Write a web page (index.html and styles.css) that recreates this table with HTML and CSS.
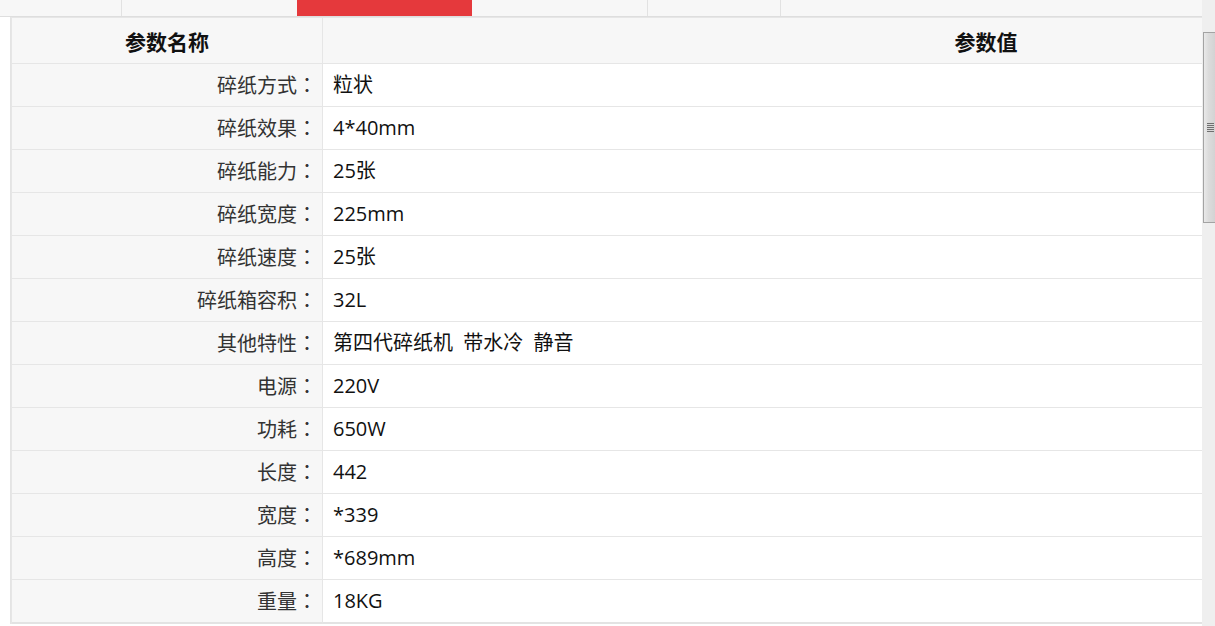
FILE: index.html
```html
<!DOCTYPE html>
<html lang="zh-CN">
<head>
<meta charset="utf-8">
<title>参数</title>
<link rel="stylesheet" href="styles.css">
</head>
<body>
<div class="page">
  <div class="main">
    <div class="tabs">
      <div class="tab tab-a"></div>
      <div class="tab tab-b"></div>
      <div class="tab tab-active"></div>
      <div class="tab tab-b"></div>
      <div class="tab tab-c"></div>
      <div class="tab tab-rest"></div>
    </div>
    <div class="spec">
      <table class="spec-table">
        <colgroup><col class="col-name"><col class="col-value"></colgroup>
        <thead>
          <tr><th>参数名称</th><th>参数值</th></tr>
        </thead>
        <tbody>
          <tr><td class="k">碎纸方式<span class="colon" lang="ja">：</span></td><td class="v">粒状</td></tr>
          <tr><td class="k">碎纸效果<span class="colon" lang="ja">：</span></td><td class="v">4*40mm</td></tr>
          <tr><td class="k">碎纸能力<span class="colon" lang="ja">：</span></td><td class="v">25张</td></tr>
          <tr><td class="k">碎纸宽度<span class="colon" lang="ja">：</span></td><td class="v">225mm</td></tr>
          <tr><td class="k">碎纸速度<span class="colon" lang="ja">：</span></td><td class="v">25张</td></tr>
          <tr><td class="k">碎纸箱容积<span class="colon" lang="ja">：</span></td><td class="v">32L</td></tr>
          <tr><td class="k">其他特性<span class="colon" lang="ja">：</span></td><td class="v">第四代碎纸机 带水冷 静音</td></tr>
          <tr><td class="k">电源<span class="colon" lang="ja">：</span></td><td class="v">220V</td></tr>
          <tr><td class="k">功耗<span class="colon" lang="ja">：</span></td><td class="v">650W</td></tr>
          <tr><td class="k">长度<span class="colon" lang="ja">：</span></td><td class="v">442</td></tr>
          <tr><td class="k">宽度<span class="colon" lang="ja">：</span></td><td class="v">*339</td></tr>
          <tr><td class="k">高度<span class="colon" lang="ja">：</span></td><td class="v">*689mm</td></tr>
          <tr><td class="k">重量<span class="colon" lang="ja">：</span></td><td class="v">18KG</td></tr>
        </tbody>
      </table>
    </div>
  </div>
  <div class="scrollbar">
    <div class="thumb"><div class="grip"></div></div>
  </div>
</div>
</body>
</html>
```
FILE: styles.css
```css
* { box-sizing: border-box; }
html, body { margin: 0; padding: 0; background: #fff; }
body {
  font-family: "Microsoft YaHei", "Noto Sans CJK SC", sans-serif;
  color: #333;
}
.page {
  display: flex;
  height: 626px;
  overflow: hidden;
}
.main {
  flex: 1;
  min-width: 0;
  overflow: hidden;
}
.tabs {
  display: flex;
  height: 17px;
  background: #f7f7f7;
  border-bottom: 1px solid #dedede;
}
.tab { height: 16px; flex: none; }
.tab-a { width: 122px; border-right: 1px solid #e2e2e2; }
.tab-b { width: 175px; }
.tab-active { width: 175px; background: #e5393c; }
.tab-c { width: 134px; border-left: 1px solid #e2e2e2; border-right: 1px solid #e2e2e2; }
.tab-rest { flex: 1; }
.spec {
  margin-left: 10px;
  border-left: 1px solid #e4e4e4;
  width: 1640px;
}
.spec-table {
  table-layout: fixed;
  width: 1639px;
  border-collapse: separate;
  border-spacing: 0;
  border-top: 1px solid #e6e6e6;
  border-left: 1px solid #e6e6e6;
}
.col-name { width: 311px; }
.col-value { width: 1327px; }
.spec-table th,
.spec-table td {
  padding: 0;
  border-right: 1px solid #e6e6e6;
  border-bottom: 1px solid #e6e6e6;
  white-space: nowrap;
}
.spec-table th {
  height: 46px;
  line-height: 43px;
  padding-top: 2px;
  background: #f7f7f7;
  font-size: 21px;
  font-weight: bold;
  color: #111;
  text-align: center;
}
.spec-table td {
  height: 43px;
  line-height: 42px;
  font-size: 20px;
}
.spec-table tbody tr:last-child td { border-bottom: 2px solid #e3e3e3; }
.k {
  background: #f7f7f7;
  text-align: right;
  padding-right: 5px !important;
  color: #333;
}
.colon { font-family: "Noto Sans CJK JP", "Noto Sans CJK SC", sans-serif; }
.v {
  background: #fff;
  padding-left: 10px !important;
  color: #111;
  font-family: "Open Sans", "Noto Sans CJK SC", sans-serif;
  word-spacing: 5px;
}
.scrollbar {
  flex: none;
  width: 13px;
  background: #efefef;
  padding-top: 32px;
  padding-left: 1px;
}
.thumb {
  height: 191px;
  border: 1px solid #a3a3a3;
  border-right: none;
  background: linear-gradient(to right, #e9e9e9, #dcdcdc 40%, #d3d3d3);
  display: flex;
  align-items: center;
  justify-content: center;
}
.grip {
  width: 7px;
  height: 9px;
  margin-left: 2px;
  background: repeating-linear-gradient(to bottom, #6f6f6f 0 1px, #d8d8d8 1px 2px);
}
```
